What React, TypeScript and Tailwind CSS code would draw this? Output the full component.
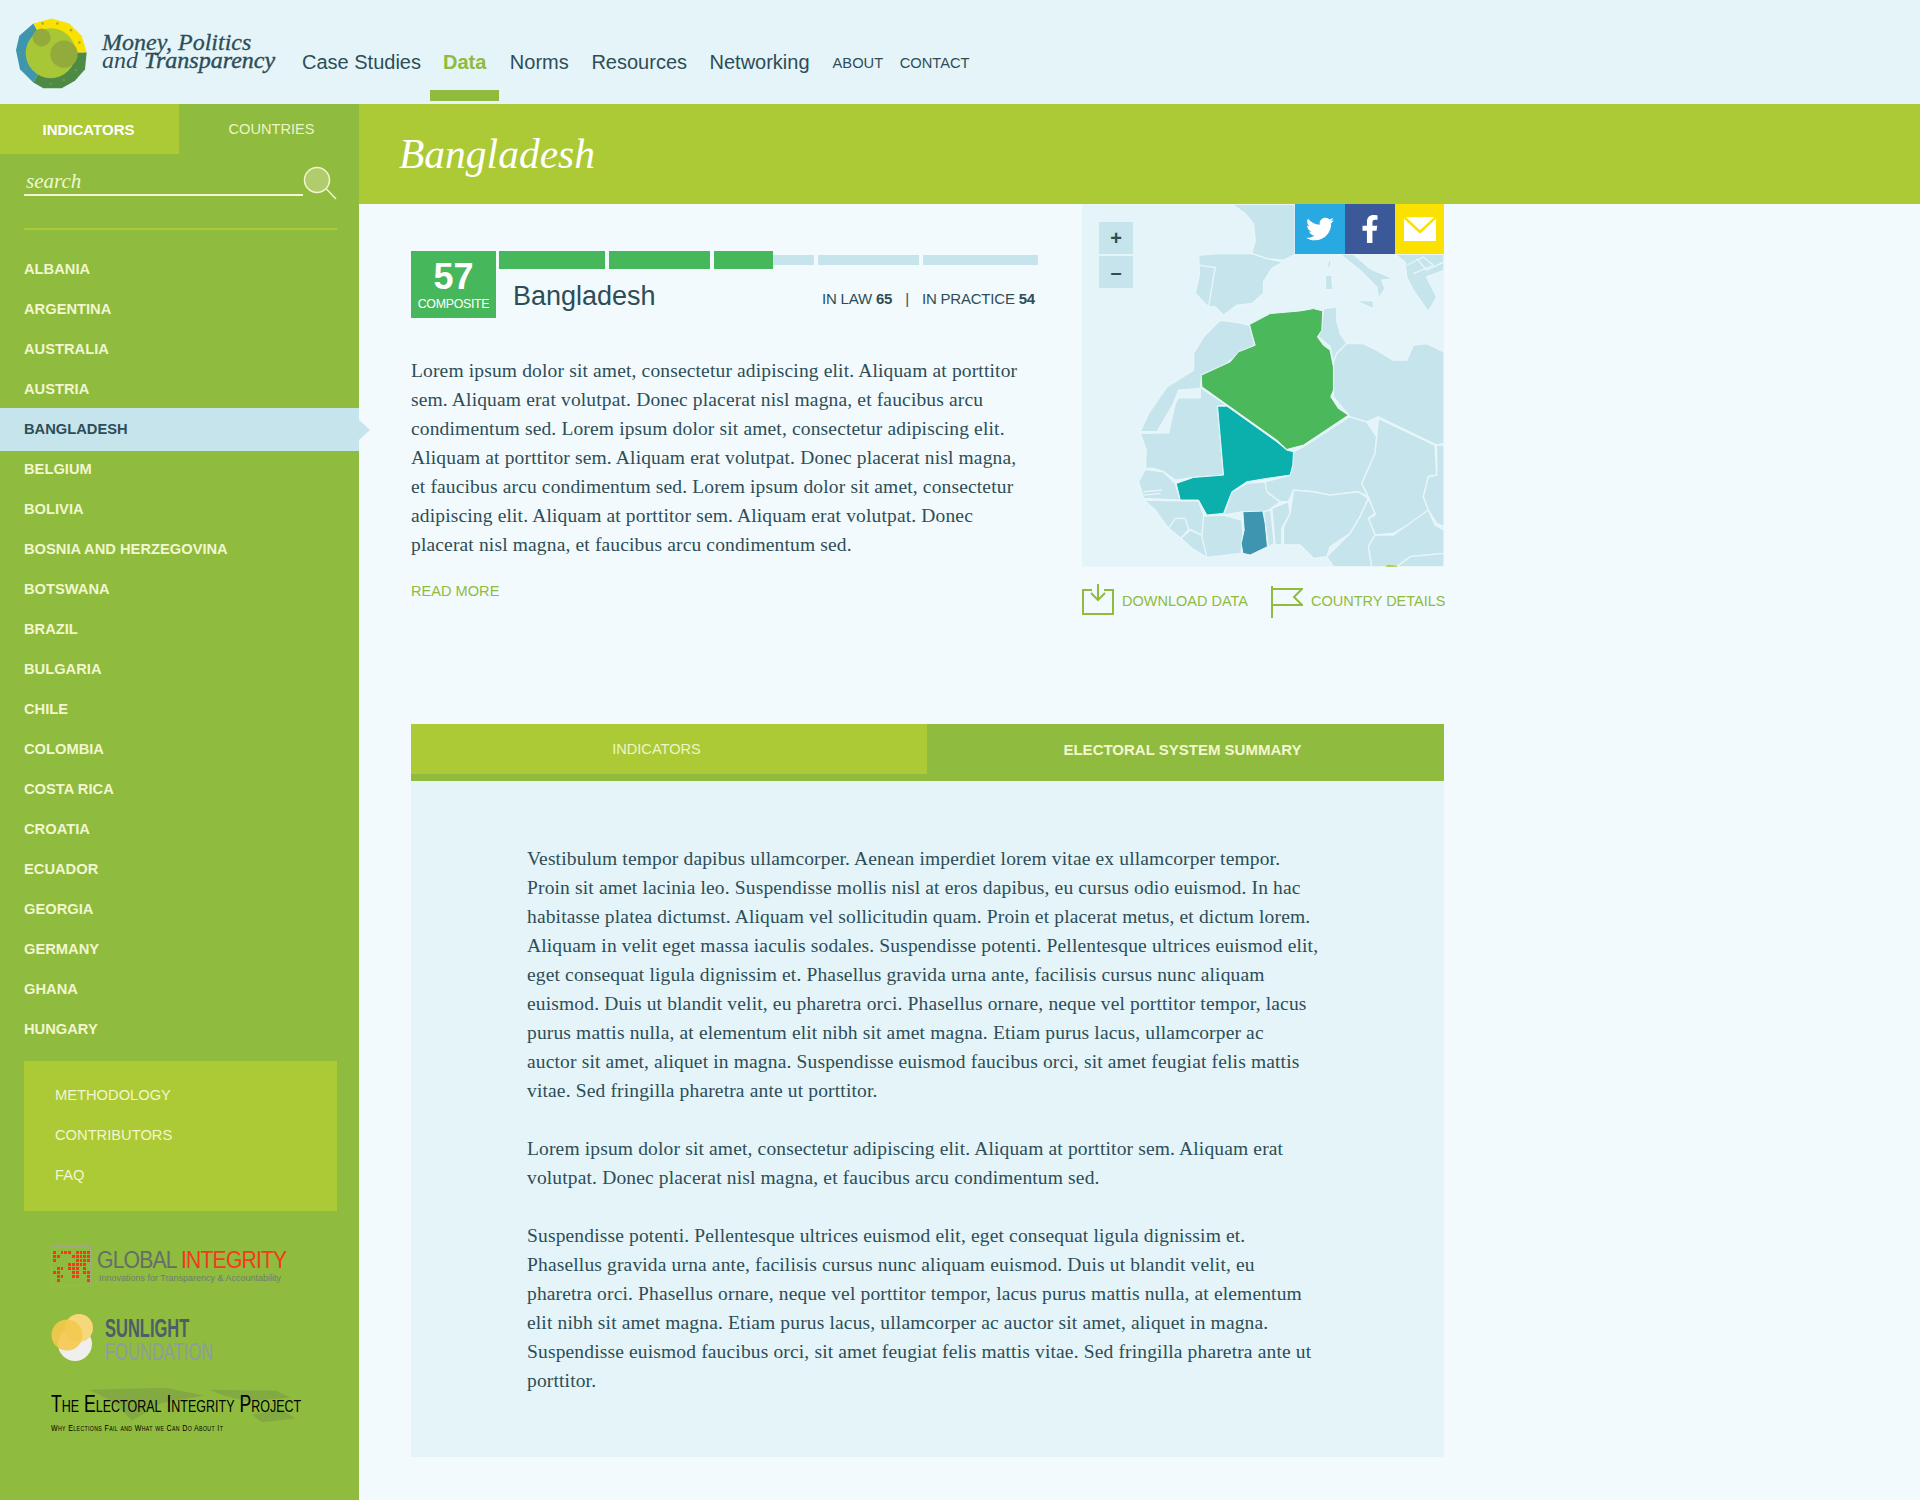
import React from "react";
import { FaTwitter, FaFacebookF } from "react-icons/fa";

const countries = ["ALBANIA","ARGENTINA","AUSTRALIA","AUSTRIA","BANGLADESH","BELGIUM","BOLIVIA","BOSNIA AND HERZEGOVINA","BOTSWANA","BRAZIL","BULGARIA","CHILE","COLOMBIA","COSTA RICA","CROATIA","ECUADOR","GEORGIA","GERMANY","GHANA","HUNGARY"];

const land: string[] = [
  "515,42 705,42 705,192 670,210 620,205 575,190 585,150 580,100 555,70",
  "415,195 470,190 575,190 620,205 670,215 635,235 610,275 610,310 575,340 530,345 490,375 465,350 445,350 405,310 418,250",
  "840,192 880,192 930,235 1000,265 965,270 975,295 955,325 950,290 900,240",
  "795,255 815,255 818,298 797,298",
  "805,208 813,212 810,235 802,232",
  "885,330 940,332 940,356",
  "1005,192 1152,192 1152,240 1100,260 1130,320 1105,365 1060,300 1040,260 1035,215",
  "790,355 830,350 830,390 840,430 860,460 830,490 820,515 810,470 775,440 785,400",
  "860,460 910,460 950,480 1000,510 1040,510 1060,465 1100,460 1152,485 1152,760 1130,765 955,680 920,695 870,680 820,620 820,515 830,490",
  "480,390 520,395 568,405 585,465 535,490 500,520 425,555 420,595 355,600 340,640 290,725 240,725 265,670 320,590 400,540 400,490 430,440",
  "240,730 325,728 345,640 355,622 420,622 420,592 500,645 472,648 490,855 400,862 345,870 310,845 280,835 255,835 258,780",
  "235,875 255,838 310,845 345,880 360,930 250,925",
  "250,930 360,932 415,932 430,975 435,1000 425,1035 390,1018 365,1040 325,1015 285,960",
  "325,1015 345,985 375,985 385,1018 362,1045",
  "362,1045 390,1020 425,1035 445,1075 440,1103 395,1075",
  "430,978 490,975 545,990 548,1030 543,1090 440,1102 425,1040",
  "515,905 560,880 615,875 625,910 660,935 620,965 548,965 490,975",
  "610,965 632,960 642,1060 625,1072",
  "635,955 685,935 690,970 665,1015 665,1065 645,1065",
  "700,785 730,770 868,680 920,695 950,740 945,790 905,880 925,920 895,905 850,910 810,915 760,905 700,900 685,935 660,935 620,905 615,875 690,855",
  "700,900 760,905 810,915 895,905 925,925 900,980 870,1030 810,1070 800,1100 760,1105 720,1065 670,1065 670,1010 690,970",
  "955,685 1125,765 1130,855 1105,860 1090,920 1105,960 1070,990 1000,1030 945,1035 925,985 945,975 925,920 905,880 945,790",
  "1130,765 1152,765 1152,1010 1130,1000 1105,960 1090,920 1105,860 1130,855",
  "925,925 945,970 925,985 945,1035 925,1070 935,1130 820,1130 800,1100 870,1030 900,980",
  "945,1035 1000,1035 1105,960 1125,1005 1152,1020 1152,1090 1050,1100 1010,1130 935,1130 925,1070",
  "1010,1130 1050,1100 1152,1090 1152,1130",
];

function MapArt() {
  return (
    <svg viewBox="65 42 1087 1088" className="block w-[362px] h-[363px]">
      <rect x="65" y="42" width="1087" height="1088" fill="#e4f4f9" />
      {land.map((p, i) => (
        <polygon key={i} points={p} fill="#c6e4eb" stroke="#e8f6fa" strokeWidth="4" strokeLinejoin="round" />
      ))}
      <path d="M418 225 L465 232 L455 290 L445 350" fill="none" stroke="#e8f6fa" strokeWidth="4" />
      <path d="M355 622 L420 622 M250 905 L305 900 M250 915 L300 910" stroke="#e8f6fa" strokeWidth="4" fill="none" />
      <path d="M1040 225 L1090 200 L1120 225 L1060 250 M1070 205 L1100 240 L1152 215" stroke="#e8f6fa" strokeWidth="4" fill="none" />
      <polygon points="568,403 630,370 720,362 760,355 788,362 785,420 772,440 790,465 810,480 820,530 820,600 812,620 835,655 865,675 730,765 680,778 650,750 425,590 423,555 510,515 535,485 585,465 575,430" fill="#4cb85c" stroke="#e8f6fa" strokeWidth="3" strokeLinejoin="round" />
      <polygon points="472,648 500,648 650,755 680,780 700,785 698,825 690,855 620,865 560,875 515,905 490,970 440,975 415,930 360,930 348,880 400,862 490,855" fill="#0bb0ac" stroke="#e8f6fa" strokeWidth="3" strokeLinejoin="round" />
      <polygon points="548,965 608,963 615,1000 622,1070 570,1095 548,1090 543,1060 552,1020" fill="#3d95af" stroke="#e8f6fa" strokeWidth="3" strokeLinejoin="round" />
      <polygon points="975,1130 985,1124 1010,1127 1012,1130" fill="#acc936" />
    </svg>
  );
}

function Logo() {
  return (
    <svg viewBox="48 52 213 212" className="w-[71px] h-[71px] shrink-0">
      <polygon points="100,245 60,205 48,148 58,105 100,68 150,157" fill="#3d95af" />
      <polygon points="100,68 155,53 208,68 245,105 260,155 150,157" fill="#fae100" />
      <polygon points="260,155 255,205 225,240 185,262 130,262 100,245 150,157" fill="#4d8a45" />
      <circle cx="152" cy="157" r="75" fill="#a8c737" />
      <circle cx="125" cy="110" r="27" fill="#93ab3a" />
      <circle cx="192" cy="160" r="41" fill="#93ab3a" />
      <g fill="#7f9a3f" opacity="0.7">
        <circle cx="128" cy="68" r="4" /><circle cx="172" cy="68" r="4" /><circle cx="213" cy="88" r="4" /><circle cx="238" cy="125" r="4" />
        <circle cx="228" cy="208" r="4" /><circle cx="192" cy="238" r="4" /><circle cx="152" cy="248" r="4" /><circle cx="62" cy="157" r="4" /><circle cx="78" cy="205" r="4" /><circle cx="95" cy="90" r="4" />
      </g>
    </svg>
  );
}

function GIcon() {
  const rows = ["x.xxx.xxxx","xx...xxxxx","x.....xxxx","....xxxxx.",".xx.xxx.x.","xx...xx.xx",".xx..xx..x",".x.......x"];
  return (
    <div className="w-[40px] h-[40px] border border-[#a5a98a] flex flex-col justify-center gap-[1px] pl-[1px]">
      {rows.map((r, i) => (
        <div key={i} className="flex gap-[1px]">
          {r.split("").map((c, j) => (
            <span key={j} className={c === "x" ? "w-[3px] h-[3px] bg-[#f5391c]" : "w-[3px] h-[3px]"} />
          ))}
        </div>
      ))}
    </div>
  );
}

export default function App() {
  const serif = "font-['Liberation_Serif',serif]";
  return (
    <div className="w-[1920px] h-[1500px] overflow-hidden bg-[#f2fafd] text-[#2d4d57] font-['Liberation_Sans',Arial,sans-serif]">
      <header className="h-[104px] bg-[#e4f4f9] flex items-start pl-4">
        <div className="mt-[18px]"><Logo /></div>
        <div className={`${serif} italic ml-[15px] mt-[33px] w-[200px] shrink-0 text-[24px] leading-[18px] text-[#2d4d57] whitespace-nowrap`}>
          <span className="[-webkit-text-stroke:0.3px_#2d4d57]">Money, Politics</span><br />and <span className="[-webkit-text-stroke:0.4px_#2d4d57]">Transparency</span>
        </div>
        <nav className="flex items-center gap-[22px] h-[104px] pt-[20px] text-[20px]">
          <a>Case Studies</a>
          <a className="relative font-bold text-[#8fbb3e]">Data<span className="absolute -left-[13px] -right-[13px] top-[43px] h-[11px] bg-[#8fbb3e]" /></a>
          <a className="ml-[1.5px]">Norms</a>
          <a className="ml-[0.7px]">Resources</a>
          <a className="ml-[0.5px]">Networking</a>
          <a className="text-[14.7px] pt-[2px] ml-[1px]">ABOUT</a>
          <a className="text-[14.7px] pt-[2px] -ml-[5.5px]">CONTACT</a>
        </nav>
      </header>

      <div className="flex">
        <aside className="w-[359px] h-[1396px] shrink-0 bg-[#8fbb3e] text-[#f2f7cf]">
          <div className="flex h-[50px] items-stretch pt-0">
            <div className="w-[179px] bg-[#acc936] flex items-center justify-center pt-[2px] font-bold text-[15px] text-white pr-[2px]">INDICATORS</div>
            <div className="flex-1 flex items-center justify-center pt-[2px] text-[14.6px] text-[#eef5c6] pl-[5px]">COUNTRIES</div>
          </div>
          <div className="ml-6 w-[313px] h-[76px] border-b-2 border-[#acc936] flex items-start">
            <div className={`${serif} italic text-[21px] w-[279px] shrink-0 h-[42px] border-b-2 border-[#f2f7cf] pl-[2px] leading-[54px]`}>search</div>
            <svg viewBox="0 0 34 34" className="w-[34px] h-[34px] mt-[12px] shrink-0">
              <circle cx="14" cy="14" r="12.5" fill="#b1cc6c" stroke="#f2f7cf" strokeWidth="1.5" />
              <path d="M23.5 23 L33 33" stroke="#f2f7cf" strokeWidth="1.5" />
            </svg>
          </div>
          <ul className="mt-[18px]">
            {countries.map((c) => {
              const active = c === "BANGLADESH";
              return (
                <li
                  key={c}
                  className={active
                    ? "relative z-10 h-[43px] -mb-[3px] pt-[3px] pb-[3px] pl-6 flex items-center font-bold text-[14.7px] bg-[#c6e4eb] text-[#2d4d57]"
                    : "h-10 pl-6 pt-[3px] flex items-center font-bold text-[14.7px]"}
                >
                  {c}
                  {active && <span className="absolute left-full top-[12px] border-y-[10px] border-l-[11px] border-y-transparent border-l-[#c6e4eb]" />}
                </li>
              );
            })}
          </ul>
          <div className="ml-6 w-[313px] mt-[13px] bg-[#acc936] pt-[14px] pb-[16px] pl-[31px] text-[14.7px] text-[#f2f7cf]">
            <div className="h-10 flex items-center">METHODOLOGY</div>
            <div className="h-10 flex items-center">CONTRIBUTORS</div>
            <div className="h-10 flex items-center">FAQ</div>
          </div>
          <div className="pl-[51px] mt-[35px]">
            <div className="flex gap-[6px] h-[40px]">
              <GIcon />
              <div>
                <div className="origin-left scale-x-[0.92] text-[23px] leading-[28px] tracking-[-0.9px] text-[#666d6c] whitespace-nowrap">GLOBAL <span className="text-[#f5391c]">INTEGRITY</span></div>
                <div className="text-[9px] leading-[10px] text-[#6d7d70] whitespace-nowrap -mt-[1px] pl-[2px]">Innovations for Transparency &amp; Accountability</div>
              </div>
            </div>
            <div className="flex gap-[10px] mt-[27px] h-[50px]">
              <svg viewBox="0 0 44 48" className="w-[44px] h-[48px] shrink-0">
                <circle cx="24" cy="31" r="17" fill="#eff0ee" />
                <circle cx="28" cy="15" r="14" fill="#f6d77a" />
                <circle cx="16" cy="22" r="15.5" fill="#f5c94e" opacity="0.9" />
              </svg>
              <div className="w-[110px] pt-[3px]">
                <div className="origin-left scale-x-[0.66] font-bold text-[25px] leading-[25px] text-[#4e5d68] whitespace-nowrap">SUNLIGHT</div>
                <div className="origin-left scale-x-[0.69] text-[24px] leading-[21px] text-[#8e9ca0] whitespace-nowrap">FOUNDATION</div>
              </div>
            </div>
            <div className="relative mt-[29px] h-[50px] text-black">
              <svg viewBox="0 0 250 40" className="absolute left-[14px] top-[-5px] w-[240px] h-[40px]">
                <path d="M25 2 L105 0 L145 8 L100 16 L70 34 L60 24 L45 12 Z M150 2 L220 3 L235 10 L190 14 L165 8 Z M195 28 L225 22 L240 32 L205 36 Z" fill="#83aa42" />
              </svg>
              <div className="relative origin-left scale-x-[0.735] whitespace-nowrap text-[24px] leading-[24px]" style={{ fontVariant: "small-caps" }}>The Electoral Integrity Project</div>
              <div className="relative origin-left scale-x-[0.74] whitespace-nowrap text-[9.5px] leading-[12px] mt-[6px] tracking-[0.5px]" style={{ fontVariant: "small-caps" }}>Why Elections Fail and What we Can Do About It</div>
            </div>
          </div>
        </aside>

        <main className="flex-1">
          <div className="h-[100px] bg-[#acc936] pl-10 flex items-center">
            <h1 className={`${serif} italic text-[41.5px] text-white`}>Bangladesh</h1>
          </div>
          <div className="pl-[52px] w-[1085px]">
            <div className="flex h-[520px]">
              <div className="w-[627px] pt-[47px] shrink-0">
                <div className="flex">
                  <div className="w-[85px] h-[67px] bg-[#47b75b] text-white flex flex-col items-center shrink-0">
                    <div className="text-[36px] font-bold leading-[36px] mt-[6px] pt-[2px]">57</div>
                    <div className="text-[12.4px] leading-[14px] mt-[2px] tracking-[-0.3px]">COMPOSITE</div>
                  </div>
                  <div className="flex-1 pl-[3px]">
                    <div className="flex gap-[4px] h-[18px] items-center">
                      <div className="w-[106px] h-[18px] bg-[#47b75b] shrink-0" />
                      <div className="w-[101px] h-[18px] bg-[#47b75b] shrink-0" />
                      <div className="relative w-[100px] h-[10px] bg-[#c6e4eb] shrink-0">
                        <div className="absolute left-0 top-[-4px] w-[59px] h-[18px] bg-[#47b75b]" />
                      </div>
                      <div className="w-[101px] h-[10px] bg-[#c6e4eb] shrink-0" />
                      <div className="w-[115px] h-[10px] bg-[#c6e4eb] shrink-0" />
                    </div>
                    <div className="flex items-center justify-between pl-[14px] pr-[3px] mt-[10px]">
                      <div className="text-[27px] leading-[34px]">Bangladesh</div>
                      <div className="text-[15px] pt-[7px] whitespace-nowrap tracking-[-0.2px]">IN LAW <b>65</b><span className="mx-[13px]">|</span>IN PRACTICE <b>54</b></div>
                    </div>
                  </div>
                </div>
                <p className={`${serif} text-[19.5px] tracking-[0.15px] leading-[29px] mt-[38px] w-[613px]`}>
                  Lorem ipsum dolor sit amet, consectetur adipiscing elit. Aliquam at porttitor sem. Aliquam erat volutpat. Donec placerat nisl magna, et faucibus arcu condimentum sed. Lorem ipsum dolor sit amet, consectetur adipiscing elit. Aliquam at porttitor sem. Aliquam erat volutpat. Donec placerat nisl magna, et faucibus arcu condimentum sed. Lorem ipsum dolor sit amet, consectetur adipiscing elit. Aliquam at porttitor sem. Aliquam erat volutpat. Donec placerat nisl magna, et faucibus arcu condimentum sed.
                </p>
                <a className="block mt-[22px] text-[14.6px] text-[#8fbb3e]">READ MORE</a>
              </div>
              <div className="w-[362px] ml-[44px] shrink-0">
                <div className="relative w-[362px] h-[363px]">
                  <MapArt />
                  <div className="absolute left-[17px] top-[18px] flex flex-col gap-[2px]">
                    <div className="w-[34px] h-[32px] bg-[#c6e4eb] flex items-center justify-center font-bold text-[20px]">+</div>
                    <div className="w-[34px] h-[32px] bg-[#c6e4eb] flex items-center justify-center font-bold text-[20px]">–</div>
                  </div>
                  <div className="absolute right-0 top-0 flex">
                    <div className="w-[50px] h-[50px] bg-[#29a9e1] flex items-center justify-center text-white"><FaTwitter size={28} /></div>
                    <div className="w-[50px] h-[50px] bg-[#3b5998] flex items-center justify-center text-white"><FaFacebookF size={28} /></div>
                    <div className="w-[49px] h-[50px] bg-[#fae100] flex items-center justify-center">
                      <svg viewBox="0 0 32 24" className="w-[32px] h-[24px]"><rect width="32" height="24" fill="#fff" /><path d="M0 0 L16 15 L32 0" fill="none" stroke="#fae100" strokeWidth="2.5" /></svg>
                    </div>
                  </div>
                </div>
                <div className="flex items-center mt-[15px] h-[40px] text-[14.5px] text-[#8fbb3e] whitespace-nowrap">
                  <svg viewBox="0 0 32 32" className="w-[32px] h-[32px] shrink-0 -mt-[7px]" fill="none" stroke="#8fbb3e" strokeWidth="2">
                    <path d="M10 7 H1 V31 H31 V7 H22 M16 1 V16 M9 10 L16 17 L23 10" />
                  </svg>
                  <span className="ml-[8px]">DOWNLOAD DATA</span>
                  <svg viewBox="0 0 32 32" className="w-[32px] h-[32px] shrink-0 ml-[23px] -mt-[1px]" fill="none" stroke="#8fbb3e" strokeWidth="2">
                    <path d="M1 0 V32 M1 3 H31 L23 11 L31 19 H1" />
                  </svg>
                  <span className="ml-[8px]">COUNTRY DETAILS</span>
                </div>
              </div>
            </div>
            <div className="flex h-[57px] bg-[#8fbb3e]">
              <div className="w-[516px] h-[50px] bg-[#acc936] text-[#eef5c6] text-[14.6px] flex items-center justify-center pt-[2px] pr-[25px]">INDICATORS</div>
              <div className="flex-1 h-[50px] text-[#f2f7cf] font-bold text-[15px] flex items-center justify-center pt-[2px] pr-[6px]">ELECTORAL SYSTEM SUMMARY</div>
            </div>
            <div className={`${serif} bg-[#e4f4f9] pt-[63px] pb-[62px] pl-[116px] pr-[120px] text-[19.5px] tracking-[0.15px] leading-[29px]`}>
              <p>Vestibulum tempor dapibus ullamcorper. Aenean imperdiet lorem vitae ex ullamcorper tempor. Proin sit amet lacinia leo. Suspendisse mollis nisl at eros dapibus, eu cursus odio euismod. In hac habitasse platea dictumst. Aliquam vel sollicitudin quam. Proin et placerat metus, et dictum lorem. Aliquam in velit eget massa iaculis sodales. Suspendisse potenti. Pellentesque ultrices euismod elit, eget consequat ligula dignissim et. Phasellus gravida urna ante, facilisis cursus nunc aliquam euismod. Duis ut blandit velit, eu pharetra orci. Phasellus ornare, neque vel porttitor tempor, lacus purus mattis nulla, at elementum elit nibh sit amet magna. Etiam purus lacus, ullamcorper ac<br />auctor sit amet, aliquet in magna. Suspendisse euismod faucibus orci, sit amet feugiat felis mattis vitae. Sed fringilla pharetra ante ut porttitor.</p>
              <p className="mt-[29px]">Lorem ipsum dolor sit amet, consectetur adipiscing elit. Aliquam at porttitor sem. Aliquam erat volutpat. Donec placerat nisl magna, et faucibus arcu condimentum sed.</p>
              <p className="mt-[29px]">Suspendisse potenti. Pellentesque ultrices euismod elit, eget consequat ligula dignissim et. Phasellus gravida urna ante, facilisis cursus nunc aliquam euismod. Duis ut blandit velit, eu pharetra orci. Phasellus ornare, neque vel porttitor tempor, lacus purus mattis nulla, at elementum elit nibh sit amet magna. Etiam purus lacus, ullamcorper ac auctor sit amet, aliquet in magna. Suspendisse euismod faucibus orci, sit amet feugiat felis mattis vitae. Sed fringilla pharetra ante ut porttitor.</p>
            </div>
          </div>
        </main>
      </div>
    </div>
  );
}
